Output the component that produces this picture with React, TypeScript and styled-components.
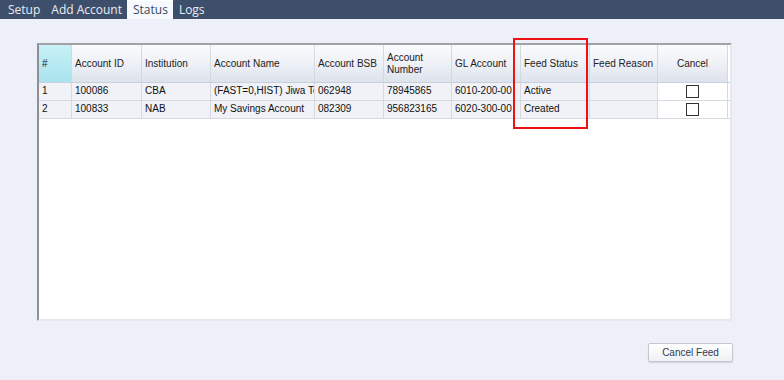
import * as React from 'react';
import styled, {createGlobalStyle} from 'styled-components';

const GlobalStyle = createGlobalStyle`
  html, body {
    margin: 0;
    padding: 0;
    background: #edf0f8;
  }
  body {
    width: 784px;
    height: 380px;
    overflow: hidden;
    font-family: 'Liberation Sans', Arial, sans-serif;
  }
`;

const Page = styled.div`
  position: relative;
  width: 784px;
  height: 380px;
  display: flex;
  flex-direction: column;
`;

const TabBar = styled.div`
  height: 19px;
  background: #3e4f6b;
  display: flex;
  align-items: stretch;
  padding-left: 2px;
`;

const Tab = styled.div<{active?: boolean}>`
  font-family: 'Open Sans', sans-serif;
  font-size: 12px;
  line-height: 17px;
  padding: 0 5px 0 6px;
  color: ${p => (p.active ? '#3b4a62' : '#e9edf3')};
  background: ${p => (p.active ? '#f5f8fc' : 'transparent')};
  border-top: ${p => (p.active ? '1px solid #ffffff' : '1px solid transparent')};
`;

const Content = styled.div`
  flex: 1;
  display: flex;
  flex-direction: column;
  padding: 24px 52px 0 37px;
`;

const Grid = styled.div`
  height: 278px;
  background: #ffffff;
  border-left: 2px solid #8d8f94;
  border-top: 2px solid #a0a2a6;
  border-right: 2px solid #e6e8ec;
  border-bottom: 2px solid #e6e8ec;
  box-sizing: border-box;
`;

const columns = '33px 70px 69px 104px 69px 68px 69px 69px 68px 70px';

const HeaderRow = styled.div`
  display: grid;
  grid-template-columns: ${columns};
  height: 37px;
  border-bottom: 1px solid #c9d0db;
`;

const HeaderCell = styled.div<{selected?: boolean; center?: boolean}>`
  display: flex;
  align-items: center;
  justify-content: ${p => (p.center ? 'center' : 'flex-start')};
  padding: 0 3px;
  font-size: 10px;
  line-height: 12px;
  color: #222;
  border-right: 1px solid #d4d9e1;
  background: ${p =>
    p.selected
      ? 'linear-gradient(#c8f1f6, #a9e3ee)'
      : 'linear-gradient(#f9fafc 0%, #eef1f6 50%, #dde3ec 100%)'};
`;

const DataRow = styled.div`
  display: grid;
  grid-template-columns: ${columns};
  height: 17px;
  border-bottom: 1px solid #d6d9df;
`;

const Cell = styled.div<{white?: boolean; center?: boolean}>`
  display: flex;
  align-items: center;
  justify-content: ${p => (p.center ? 'center' : 'flex-start')};
  padding: 0 3px 2px;
  font-size: 10px;
  color: #111;
  white-space: nowrap;
  overflow: hidden;
  text-overflow: clip;
  background: ${p => (p.white ? '#ffffff' : '#f0f2f7')};
  border-right: 1px solid #d6d9df;
`;

const CheckBox = styled.div`
  width: 11px;
  height: 11px;
  margin-top: 2px;
  border: 1px solid #333;
  background: #fff;
`;

const Footer = styled.div`
  display: flex;
  justify-content: flex-end;
  padding-top: 22px;
`;

const Button = styled.div`
  width: 85px;
  height: 19px;
  box-sizing: border-box;
  display: flex;
  align-items: center;
  justify-content: center;
  font-size: 10px;
  color: #2f3b4e;
  background: linear-gradient(#ffffff, #eef0f3);
  border: 1px solid #c3c7cd;
  border-radius: 2px;
  box-shadow: 0 1px 1px rgba(0, 0, 0, 0.12);
  margin-right: -1px;
`;

const Highlight = styled.div`
  position: absolute;
  left: 513px;
  top: 38px;
  width: 75px;
  height: 91px;
  box-sizing: border-box;
  border: 2px solid #ee1111;
  pointer-events: none;
`;

const headers = [
  'Account ID',
  'Institution',
  'Account Name',
  'Account BSB',
  'Account Number',
  'GL Account',
  'Feed Status',
  'Feed Reason',
];

const rows = [
  ['1', '100086', 'CBA', '(FAST=0,HIST) Jiwa Test', '062948', '78945865', '6010-200-00', 'Active', ''],
  ['2', '100833', 'NAB', 'My Savings Account', '082309', '956823165', '6020-300-00', 'Created', ''],
];

export default function App() {
  return (
    <Page>
      <GlobalStyle />
      <TabBar>
        <Tab>Setup</Tab>
        <Tab>Add Account</Tab>
        <Tab active>Status</Tab>
        <Tab>Logs</Tab>
      </TabBar>
      <Content>
        <Grid>
          <HeaderRow>
            <HeaderCell selected>#</HeaderCell>
            {headers.map(h => (
              <HeaderCell key={h}>{h}</HeaderCell>
            ))}
            <HeaderCell center>Cancel</HeaderCell>
          </HeaderRow>
          {rows.map(r => (
            <DataRow key={r[0]}>
              {r.map((v, i) => (
                <Cell key={i}>{v}</Cell>
              ))}
              <Cell white center>
                <CheckBox />
              </Cell>
            </DataRow>
          ))}
        </Grid>
        <Footer>
          <Button>Cancel Feed</Button>
        </Footer>
      </Content>
      <Highlight />
    </Page>
  );
}
